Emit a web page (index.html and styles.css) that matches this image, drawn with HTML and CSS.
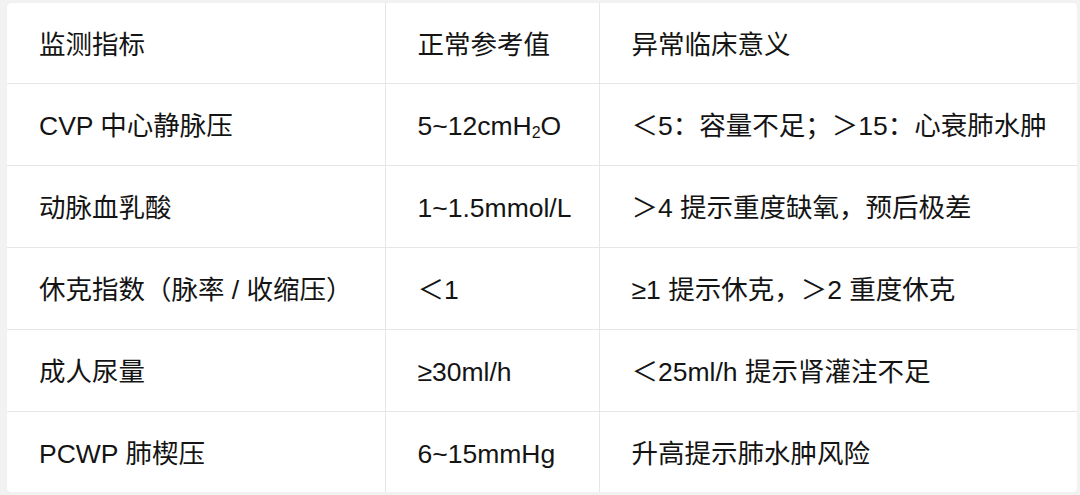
FILE: index.html
```html
<!DOCTYPE html>
<html lang="zh-CN">
<head>
<meta charset="utf-8">
<title>监测指标</title>
<link rel="stylesheet" href="styles.css">
</head>
<body>
<div class="frame">
  <div class="card">
    <table class="grid">
      <colgroup>
        <col class="c1">
        <col class="c2">
        <col class="c3">
      </colgroup>
      <thead>
        <tr><th>监测指标</th><th>正常参考值</th><th>异常临床意义</th></tr>
      </thead>
      <tbody>
        <tr><td>CVP 中心静脉压</td><td>5~12cmH<sub>2</sub>O</td><td>＜5：容量不足；＞15：心衰肺水肿</td></tr>
        <tr><td>动脉血乳酸</td><td>1~1.5mmol/L</td><td>＞4 提示重度缺氧，预后极差</td></tr>
        <tr><td>休克指数（脉率 / 收缩压）</td><td>＜1</td><td>≥1 提示休克，＞2 重度休克</td></tr>
        <tr><td>成人尿量</td><td>≥30ml/h</td><td>＜25ml/h 提示肾灌注不足</td></tr>
        <tr><td>PCWP 肺楔压</td><td>6~15mmHg</td><td>升高提示肺水肿风险</td></tr>
      </tbody>
    </table>
  </div>
</div>
</body>
</html>
```
FILE: styles.css
```css
html, body {
  margin: 0;
  padding: 0;
  background: #f2f2f2;
}
.frame {
  width: 1080px;
  height: 495px;
  padding: 3px 3px 3px 7px;
  box-sizing: border-box;
}
.card {
  background: #ffffff;
  border-radius: 4px;
  overflow: hidden;
  height: 489px;
  box-shadow: 0 0 1px rgba(0,0,0,0.06);
}
.grid {
  width: 100%;
  height: 100%;
  border-collapse: collapse;
  table-layout: fixed;
  font-family: "Liberation Sans", "Noto Sans CJK SC", sans-serif;
  font-size: 26.5px;
  line-height: 32px;
  color: #141414;
}
.c1 { width: 378px; }
.c2 { width: 214px; }
.c3 { width: auto; }
.grid th, .grid td {
  text-align: left;
  font-weight: normal;
  padding: 3px 4px 0 32px;
  height: 78px;
  border-top: 1px solid #e6e6e6;
  border-left: 1px solid #e6e6e6;
  white-space: nowrap;
  vertical-align: middle;
}
.grid thead th { border-top: none; height: 77px; }
.grid th:first-child, .grid td:first-child { border-left: none; }
.grid sub {
  font-size: 16px;
  vertical-align: -3px;
  line-height: 0;
}
```
